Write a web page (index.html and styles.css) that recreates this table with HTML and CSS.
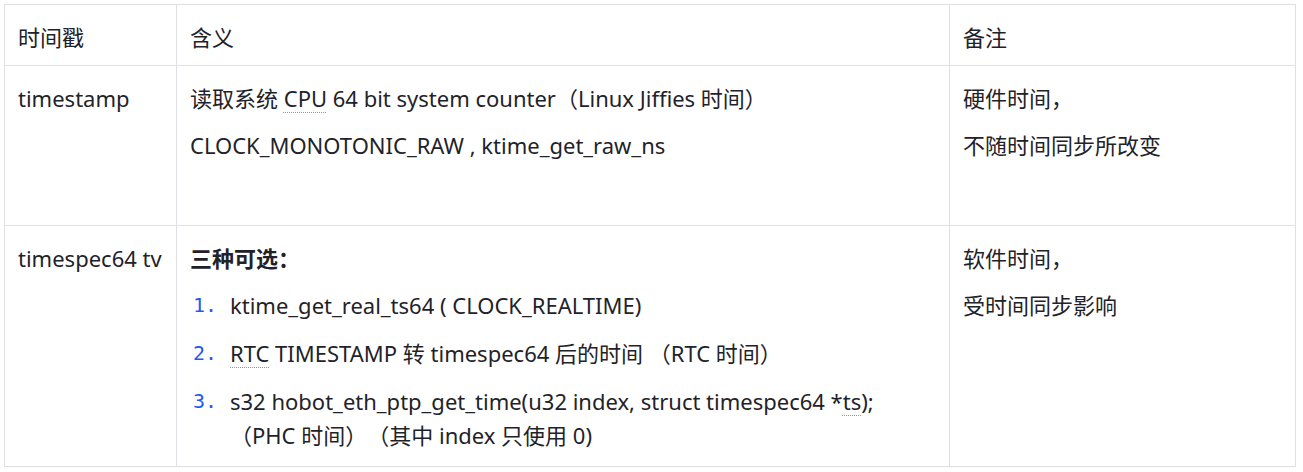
FILE: index.html
```html
<!DOCTYPE html>
<html lang="zh-CN">
<head>
<meta charset="utf-8">
<title>时间戳</title>
<link rel="stylesheet" href="styles.css">
</head>
<body>
<table class="doc-table">
  <colgroup>
    <col class="col-a">
    <col class="col-b">
    <col class="col-c">
  </colgroup>
  <tbody>
    <tr class="row-head">
      <td><p>时间戳</p></td>
      <td><p>含义</p></td>
      <td><p>备注</p></td>
    </tr>
    <tr class="row-one">
      <td><p>timestamp</p></td>
      <td>
        <p>读取系统 <span class="dotted">CPU</span> 64 bit system counter（Linux Jiffies 时间）</p>
        <p>CLOCK_MONOTONIC_RAW , ktime_get_raw_ns</p>
      </td>
      <td>
        <p>硬件时间，</p>
        <p>不随时间同步所改变</p>
      </td>
    </tr>
    <tr class="row-two">
      <td><p>timespec64 tv</p></td>
      <td>
        <p class="strong">三种可选：</p>
        <ol class="olist">
          <li><span class="num">1.</span><span class="txt">ktime_get_real_ts64 ( CLOCK_REALTIME)</span></li>
          <li><span class="num">2.</span><span class="txt"><span class="dotted">RTC</span> TIMESTAMP 转 timespec64 后的时间 （RTC 时间）</span></li>
          <li><span class="num">3.</span><span class="txt">s32 hobot_eth_ptp_get_time(u32 index, struct timespec64 *<span class="dotted">ts</span>);<br>（PHC 时间）（其中 index 只使用 0)</span></li>
        </ol>
      </td>
      <td>
        <p>软件时间，</p>
        <p>受时间同步影响</p>
      </td>
    </tr>
  </tbody>
</table>
</body>
</html>
```

FILE: styles.css
```css
html, body {
  background: #ffffff;
}
body {
  margin: 4px;
  font-family: "Noto Sans", "Noto Sans CJK SC", sans-serif;
  font-size: 22px;
  line-height: 34px;
  color: #1f2329;
  text-spacing-trim: space-all;
  font-feature-settings: "chws" 0, "halt" 0;
}
.doc-table {
  border-collapse: collapse;
  table-layout: fixed;
  width: 1291px;
}
.col-a { width: 172px; }
.col-b { width: 773px; }
.col-c { width: 346px; }
.doc-table td {
  border: 1px solid #dee0e3;
  vertical-align: top;
  padding: 15px 13px 10px 13px;
}
.doc-table p {
  margin: 0;
}
.doc-table p + p {
  margin-top: 13px;
}
.row-head td {
  padding-bottom: 11px;
}
.row-one {
  height: 160px;
}
.row-two td {
  padding-bottom: 14px;
}
.strong {
  font-weight: 700;
}
.olist {
  list-style: none;
  margin: 13px 0 0 0;
  padding: 0;
}
.olist li {
  display: flex;
  margin-top: 14px;
}
.olist li:first-child {
  margin-top: 0;
}
.num {
  flex: 0 0 37px;
  padding-left: 3px;
  color: #1f5af0;
  font-family: "DejaVu Sans Mono", monospace;
  font-size: 20px;
}
.txt {
  flex: 1;
}
.dotted {
  text-decoration: underline dotted #8f959e;
  text-decoration-thickness: 1px;
  text-underline-offset: 5px;
}
```
